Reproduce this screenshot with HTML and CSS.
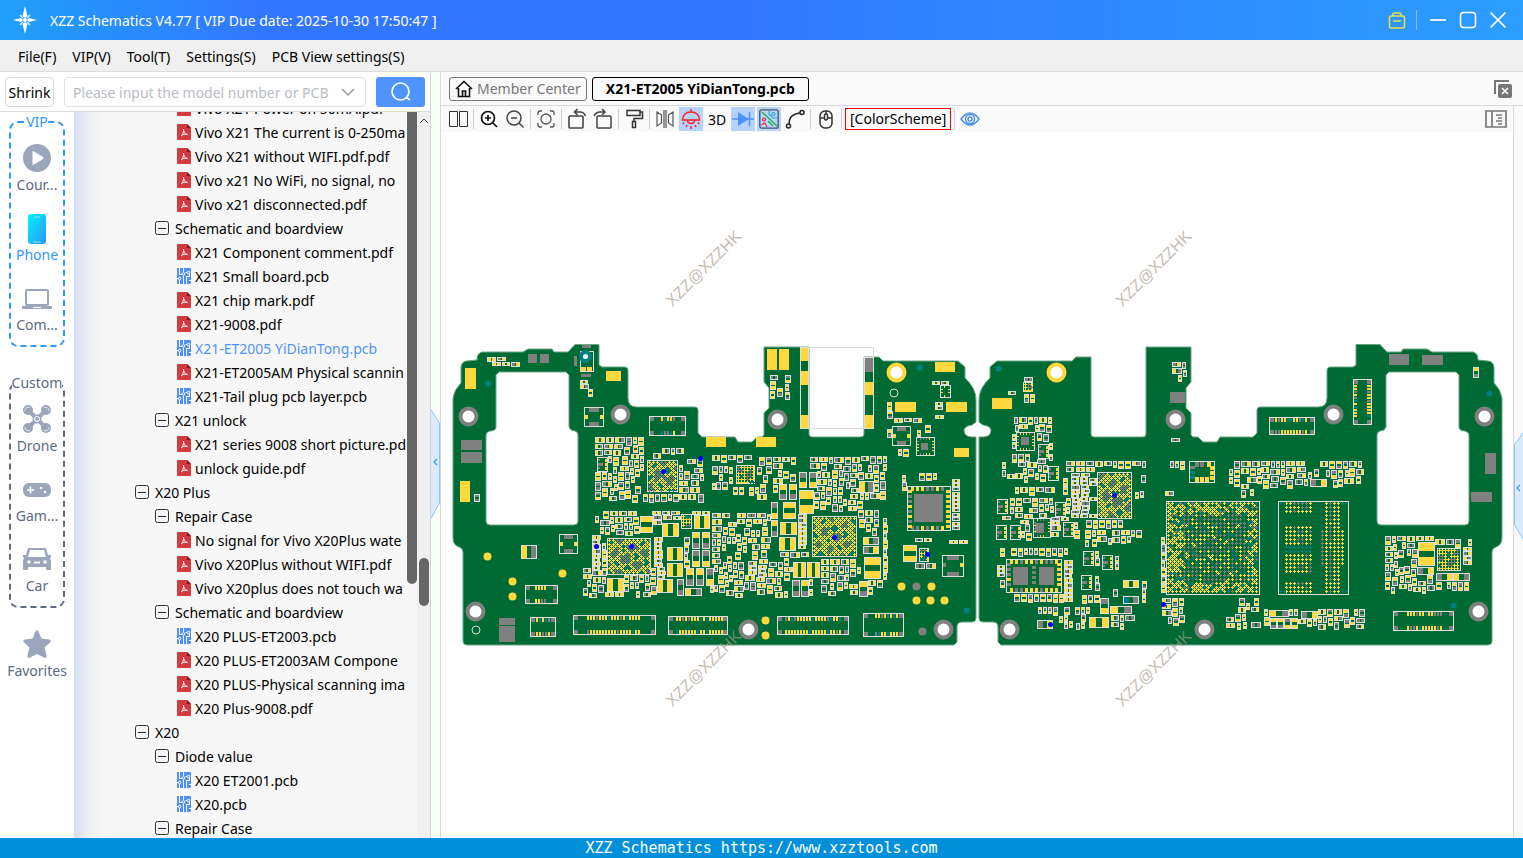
FILE: index.html
```html
<!DOCTYPE html>
<html lang="en">
<head>
<meta charset="utf-8">
<title>XZZ Schematics</title>
<link rel="stylesheet" href="styles.css">
</head>
<body>
<svg class="defs" aria-hidden="true">
  <symbol id="pdf" viewBox="0 0 14 16"><path d="M1 0H10L14 4V15Q14 16 13 16H1Q0 16 0 15V1Q0 0 1 0Z" fill="#d63a41"/><path d="M10 0L14 4H10Z" fill="#8d0d16"/><path d="M6.500 5C6.500 8 7.500 10 10.500 10.500C8 9.500 5.500 10.500 4 12C6 10.500 7 8 6.500 5" fill="none" stroke="#fff" stroke-width="1"/></symbol>
  <symbol id="pcb" viewBox="0 0 14 16"><rect width="14" height="16" rx="1" fill="#4d90fb"/><path d="M2.500 0V6.500H5M6.500 0V4M8.500 4.500H11M12.500 5V8.500H9.500V16M2.500 11V16M6.500 8V16M0 10.500H2M12 12.500H14" fill="none" stroke="#fff"/><g fill="#4d90fb" stroke="#fff"><circle cx="6.500" cy="6" r="1.300"/><circle cx="2.500" cy="10.500" r="1.300"/><circle cx="11.500" cy="4.500" r="1.300"/></g></symbol>
  <symbol id="minus" viewBox="0 0 14 14"><rect x=".5" y=".5" width="13" height="13" rx="2" fill="none" stroke="#333"/><path d="M3 7.500H11" stroke="#222"/></symbol>
</svg>

<header class="titlebar">
  <svg class="logo" viewBox="0 0 24 30"><g fill="#fff"><path d="M12 1L14.500 11L12 13L9.500 11Z"/><path d="M12 29L14.500 19L12 17L9.500 19Z"/><path d="M0 15L8 13L10 15L8 17Z"/><path d="M24 15L16 13L14 15L16 17Z"/></g><path d="M7 10L10 13M17 10L14 13M7 20L10 17M17 20L14 17" stroke="#d9ebff" stroke-width="1.500"/><circle cx="12" cy="15" r="2" fill="#fff"/></svg>
  <h1 class="app-title">XZZ Schematics V4.77 [ VIP Due date: 2025-10-30 17:50:47 ]</h1>
  <button class="win vip" aria-label="Membership"><svg viewBox="0 0 18 18"><g fill="none" stroke="#e6e04a" stroke-width="1.500"><rect x="1.500" y="5" width="15" height="12" rx="2"/><path d="M5 5V3Q5 2 6 2H12Q13 2 13 3V5M5 10H13"/></g></svg></button>
  <span class="win-sep"></span>
  <button class="win" aria-label="Minimize"><svg viewBox="0 0 18 18"><path d="M1 9H17" stroke="#fff" stroke-width="1.700"/></svg></button>
  <button class="win" aria-label="Maximize"><svg viewBox="0 0 18 18"><rect x="1.500" y="1.500" width="15" height="15" rx="3" fill="none" stroke="#fff" stroke-width="1.500"/></svg></button>
  <button class="win" aria-label="Close"><svg viewBox="0 0 18 18"><path d="M1.500 1.500L16.500 16.500M16.500 1.500L1.500 16.500" stroke="#fff" stroke-width="1.700"/></svg></button>
</header>

<nav class="menubar">
  <button>File(F)</button><button>VIP(V)</button><button>Tool(T)</button><button>Settings(S)</button><button>PCB View settings(S)</button>
</nav>

<main class="main">
  <aside class="panel">
    <form class="search">
      <button type="button" class="shrink">Shrink</button>
      <label class="combo"><input type="text" aria-label="Model search" placeholder="Please input the model number or PCB"><svg viewBox="0 0 14 8"><path d="M1 1L7 7L13 1" fill="none" stroke="#999ca5" stroke-width="1.500"/></svg></label>
      <button type="button" class="go" aria-label="Search"><svg viewBox="0 0 22 22"><circle cx="10.500" cy="10.500" r="8.500" fill="none" stroke="#fff" stroke-width="1.700"/><path d="M16 16L20 19" stroke="#fff" stroke-width="1.700"/></svg></button>
    </form>
    <div class="browse">
      <div class="rail">
        <fieldset class="group vip-group"><legend>VIP</legend>
          <button class="cat"><svg viewBox="0 0 28 28"><circle cx="14" cy="14" r="14" fill="#9ba6bc"/><path d="M9.500 8Q9.500 6.500 11 7.500L20 13Q21 14 20 15L11 20.500Q9.500 21 9.500 20Z" fill="#fff"/></svg>Cour...</button>
          <button class="cat on"><svg viewBox="0 0 28 28"><defs><linearGradient id="ph" x1="0" x2="1" y1="0" y2="1"><stop stop-color="#00f3ff"/><stop offset="1" stop-color="#2f95ff"/></linearGradient></defs><rect x="5" y="0" width="18" height="30" rx="3" fill="url(#ph)"/><path d="M11 3H17M10 28H18" stroke="#9fe6ff"/></svg>Phone</button>
          <button class="cat"><svg viewBox="0 0 28 28"><rect x="3" y="6" width="22" height="15" rx="1" fill="none" stroke="#9ba6bc" stroke-width="2"/><path d="M-1 22H29V24Q29 25 28 25H0Q-1 25 -1 24Z" fill="#9ba6bc"/><path d="M10 23.500H18" stroke="#fff"/></svg>Com...</button>
        </fieldset>
        <fieldset class="group"><legend>Custom</legend>
          <button class="cat"><svg viewBox="0 0 28 28"><g fill="#9ba6bc"><circle cx="5" cy="5" r="5"/><circle cx="23" cy="5" r="5"/><circle cx="5" cy="23" r="5"/><circle cx="23" cy="23" r="5"/></g><path d="M6 6L22 22M22 6L6 22" stroke="#9ba6bc" stroke-width="4"/><g fill="none" stroke="#e4e8ef"><path d="M2 6A3.500 3.500 0 0 1 7 2.500M26 6A3.500 3.500 0 0 0 21 2.500M2 22A3.500 3.500 0 0 0 7 25.500M26 22A3.500 3.500 0 0 1 21 25.500"/></g><circle cx="14" cy="14" r="4.500" fill="#9ba6bc"/><circle cx="14" cy="14" r="2.500" fill="none" stroke="#fff"/></svg>Drone</button>
          <button class="cat"><svg viewBox="0 0 28 28"><rect y="8" width="28" height="14" rx="6" fill="#9ba6bc"/><path d="M4 15H11M7.500 11.500V18.500" stroke="#fff" stroke-width="1.700"/><circle cx="18" cy="13" r="1.300" fill="#fff"/><circle cx="22" cy="17" r="1.300" fill="#fff"/></svg>Gam...</button>
          <button class="cat"><svg viewBox="0 0 28 28"><path d="M5 3H23L25 10H28V12L27 13Q28 15 28 17V24Q28 25 27 25H24Q23 25 23 24V22H5V24Q5 25 4 25H1Q0 25 0 24V17Q0 15 1 13L0 12V10H3Z" fill="#9ba6bc"/><path d="M7 5H21L23 12H5Z" fill="#fff"/><circle cx="6" cy="17" r="1.800" fill="#fff"/><circle cx="22" cy="17" r="1.800" fill="#fff"/><path d="M11 17.500H17" stroke="#fff" stroke-width="2"/></svg>Car</button>
        </fieldset>
        <button class="cat fav"><svg viewBox="0 0 28 28"><path d="M12.500 1.500Q14 -1 15.500 1.500L18.500 8.500L26 9.500Q29 10 27 12.500L21.500 17.500L23.500 25.500Q24 29 21 27.500L14 24L7 27.500Q4 29 4.500 25.500L6.500 17.500L1 12.500Q-1 10 2 9.500L9.500 8.500Z" fill="#9ba6bc"/></svg>Favorites</button>
      </div>
      <div class="tree-area">
        <ul class="tree">
          <li class="file"><svg><use href="#pdf"/></svg>Vivo X21 Power on 50mA.pdf</li>
          <li class="file"><svg><use href="#pdf"/></svg>Vivo X21 The current is 0-250ma</li>
          <li class="file"><svg><use href="#pdf"/></svg>Vivo X21 without WIFI.pdf.pdf</li>
          <li class="file"><svg><use href="#pdf"/></svg>Vivo x21 No WiFi, no signal, no</li>
          <li class="file"><svg><use href="#pdf"/></svg>Vivo x21 disconnected.pdf</li>
          <li class="folder"><button aria-label="Collapse"><svg><use href="#minus"/></svg></button>Schematic and boardview</li>
          <li class="file"><svg><use href="#pdf"/></svg>X21 Component comment.pdf</li>
          <li class="file"><svg><use href="#pcb"/></svg>X21 Small board.pcb</li>
          <li class="file"><svg><use href="#pdf"/></svg>X21 chip mark.pdf</li>
          <li class="file"><svg><use href="#pdf"/></svg>X21-9008.pdf</li>
          <li class="file selected"><svg><use href="#pcb"/></svg>X21-ET2005 YiDianTong.pcb</li>
          <li class="file"><svg><use href="#pdf"/></svg>X21-ET2005AM Physical scannin</li>
          <li class="file"><svg><use href="#pcb"/></svg>X21-Tail plug pcb layer.pcb</li>
          <li class="folder"><button aria-label="Collapse"><svg><use href="#minus"/></svg></button>X21 unlock</li>
          <li class="file"><svg><use href="#pdf"/></svg>X21 series 9008 short picture.pd</li>
          <li class="file"><svg><use href="#pdf"/></svg>unlock guide.pdf</li>
          <li class="model"><button aria-label="Collapse"><svg><use href="#minus"/></svg></button>X20 Plus</li>
          <li class="folder"><button aria-label="Collapse"><svg><use href="#minus"/></svg></button>Repair Case</li>
          <li class="file"><svg><use href="#pdf"/></svg>No signal for Vivo X20Plus wate</li>
          <li class="file"><svg><use href="#pdf"/></svg>Vivo X20Plus without WIFI.pdf</li>
          <li class="file"><svg><use href="#pdf"/></svg>Vivo X20plus does not touch wa</li>
          <li class="folder"><button aria-label="Collapse"><svg><use href="#minus"/></svg></button>Schematic and boardview</li>
          <li class="file"><svg><use href="#pcb"/></svg>X20 PLUS-ET2003.pcb</li>
          <li class="file"><svg><use href="#pdf"/></svg>X20 PLUS-ET2003AM Compone</li>
          <li class="file"><svg><use href="#pdf"/></svg>X20 PLUS-Physical scanning ima</li>
          <li class="file"><svg><use href="#pdf"/></svg>X20 Plus-9008.pdf</li>
          <li class="model"><button aria-label="Collapse"><svg><use href="#minus"/></svg></button>X20</li>
          <li class="folder"><button aria-label="Collapse"><svg><use href="#minus"/></svg></button>Diode value</li>
          <li class="file"><svg><use href="#pcb"/></svg>X20 ET2001.pcb</li>
          <li class="file"><svg><use href="#pcb"/></svg>X20.pcb</li>
          <li class="folder"><button aria-label="Collapse"><svg><use href="#minus"/></svg></button>Repair Case</li>
        </ul>
        <div class="inner-bar"></div>
        <div class="outer-bar"><svg viewBox="0 0 10 6"><path d="M1 5L5 1L9 5" fill="none" stroke="#444"/></svg><span class="thumb"></span></div>
      </div>
    </div>
  </aside>

  <div class="splitter"><button aria-label="Hide list"><svg viewBox="0 0 10 110"><path d="M0 .5L8.500 14V94L0 109.500" fill="#d9ecff" stroke="#8cc6f8"/><path d="M6 50L3 53L6 56" fill="none" stroke="#379df0" stroke-width="1.300"/></svg></button></div>

  <section class="work">
    <div class="tabs">
      <button class="tab home"><svg viewBox="0 0 18 18"><path d="M1 9L9 1.500L17 9M3.500 8V16.500H14.500V8M7.500 16V11H10.500V16" fill="none" stroke="#111" stroke-width="1.600"/></svg>Member Center</button>
      <button class="tab active">X21-ET2005 YiDianTong.pcb</button>
      <button class="close-all" aria-label="Close all"><svg viewBox="0 0 18 18"><path d="M1 14V1H15" fill="none" stroke="#777" stroke-width="2"/><rect x="4" y="4" width="14" height="14" rx="2" fill="#777"/><path d="M8 8L14 14M14 8L8 14" stroke="#fff" stroke-width="1.500"/></svg></button>
    </div>
    <div class="stage">
      <div class="view">
        <div class="toolbar">
          <button class="tool" aria-label="Split"><svg viewBox="0 0 20 20"><path d="M1.500 2.500H9.500V17.500H1.500ZM11.500 2.500H19.500V17.500H11.500Z" fill="none" stroke="#333"/></svg></button><i class="sep"></i>
          <button class="tool" aria-label="Zoom in"><svg viewBox="0 0 20 20"><g fill="none" stroke="#111" stroke-width="1.700"><circle cx="9" cy="9" r="6.500"/><path d="M14 14L18 18M6 9H12M9 6V12"/></g></svg></button>
          <button class="tool" aria-label="Zoom out"><svg viewBox="0 0 20 20"><g fill="none" stroke="#444" stroke-width="1.500"><circle cx="9" cy="9" r="7"/><path d="M14 14L18.500 18.500M6 9H12"/></g></svg></button><i class="sep"></i>
          <button class="tool" aria-label="Fit"><svg viewBox="0 0 20 20"><g fill="none" stroke="#555" stroke-width="1.300"><path d="M2 6V4Q2 2 4 2H6M14 2H16Q18 2 18 4V6M18 14V16Q18 18 16 18H14M6 18H4Q2 18 2 16V14"/><circle cx="10" cy="10" r="5"/></g></svg></button><i class="sep"></i>
          <button class="tool" aria-label="Rotate left"><svg viewBox="0 0 20 20"><g fill="none" stroke="#444" stroke-width="1.600"><rect x="2" y="7" width="14" height="12" rx="1"/><path d="M8 3H13Q17 3 18.500 7M10.500 0L7.500 3L10.500 6"/></g></svg></button>
          <button class="tool" aria-label="Rotate right"><svg viewBox="0 0 20 20"><g fill="none" stroke="#444" stroke-width="1.500"><rect x="4" y="7" width="14" height="12" rx="1"/><path d="M1 7Q3 3 7 3H12M9 0L12 3L9 6"/></g></svg></button><i class="sep"></i>
          <button class="tool" aria-label="Paint"><svg viewBox="0 0 20 20"><path d="M3 1.500H16V6.500H3ZM16 3H18.500V9.500H10V13M8.500 12.500H11.500V18.500H8.500Z" fill="none" stroke="#333" stroke-width="1.500"/></svg></button><i class="sep"></i>
          <button class="tool" aria-label="Mirror"><svg viewBox="0 0 20 20"><path d="M2 3L6.500 6V14L2 17ZM18 3L13.500 6V14L18 17ZM9 1V19M11 1V19" fill="none" stroke="#555" stroke-width="1.200"/></svg></button>
          <button class="tool on" aria-label="Lamp"><svg viewBox="0 0 20 20"><g fill="none" stroke="#f22" stroke-width="1.500"><path d="M1.500 11Q2 3 10 3Q18 3 18.500 11ZM10 3V0M6.500 11Q6.500 14.500 10 14.500Q13.500 14.500 13.500 11M3 13.500L2 15M17 13.500L18 15M6 16L5 18M14 16L15 18M10 17V20"/></g></svg></button>
          <button class="tool text">3D</button>
          <button class="tool on" aria-label="Diode"><svg viewBox="0 0 20 20"><path d="M-1 10H21M16.500 3V17" stroke="#4b93ff" stroke-width="1.500"/><path d="M5 3L16 10L5 17Z" fill="#4b93ff"/></svg></button>
          <button class="tool on" aria-label="Nets"><svg viewBox="0 0 20 20"><rect x=".8" y=".8" width="18.400" height="18.400" rx="2" fill="none" stroke="#456" stroke-width="1.300"/><g fill="none" stroke-width="1.200"><path d="M3 3L18 17" stroke="#16b03b"/><path d="M10 2V5L14 9H18" stroke="#2ca7df"/><circle cx="14.500" cy="5" r="1.500" stroke="#2ca7df"/><path d="M2 16L6 14L8 18" stroke="#ee3030"/><circle cx="5" cy="10.500" r="1.500" stroke="#ee3030"/><path d="M9 12L14 17" stroke="#16b03b"/></g></svg></button>
          <button class="tool" aria-label="Curve"><svg viewBox="0 0 20 20"><g fill="none" stroke="#222" stroke-width="1.500"><path d="M4 15Q4 5 15 4"/><circle cx="17" cy="3.500" r="2"/><circle cx="3.500" cy="17" r="2"/></g></svg></button><i class="sep"></i>
          <button class="tool" aria-label="Mouse"><svg viewBox="0 0 20 20"><g fill="none" stroke="#333" stroke-width="1.500"><rect x="4" y="2" width="12" height="17" rx="5"/><path d="M4 9H16M10 2V5"/><rect x="8.500" y="5" width="3" height="6" rx="1.500" fill="#fff"/></g></svg></button><i class="sep"></i>
          <button class="scheme">[ColorScheme]</button><i class="sep"></i>
          <button class="tool" aria-label="Visibility"><svg viewBox="0 0 20 20"><g fill="none" stroke="#4f90e8" stroke-width="1.500"><path d="M1 10Q10 -2 19 10Q10 22 1 10Z"/><circle cx="10" cy="10" r="4.500"/><circle cx="10" cy="10" r="2"/></g></svg></button>
          <button class="tool side" aria-label="Side list"><svg viewBox="0 0 22 20"><path d="M1 2H21V18H1ZM7 2V18" fill="none" stroke="#777" stroke-width="1.700"/><path d="M11 6H17M13 9H17M11 12H17M13 15H17" stroke="#777" stroke-width="1.300"/></svg></button>
        </div>
        <svg class="canvas" id="board" viewBox="441 132 1072 706" role="img" aria-label="Board view"></svg>
      </div>
      <div class="edge"><button aria-label="Show parts"><svg viewBox="0 0 10 110"><path d="M10 .5L.5 14V94L10 109.500" fill="#d9ecff" stroke="#8cc6f8"/><path d="M6 54L3 57L6 60" fill="none" stroke="#379df0" stroke-width="1.300"/></svg></button></div>
    </div>
  </section>
</main>
<footer class="status">XZZ Schematics https://www.xzztools.com</footer>
<script src="board.js"></script>
</body>
</html>
```
FILE: styles.css
```css
* { box-sizing: border-box; }
body { margin: 0; height: 100vh; display: flex; flex-direction: column; overflow: hidden; font-family: "Noto Sans", "Open Sans", sans-serif; font-size: 14px; color: #000; background: #fff; }
button { font: inherit; color: inherit; background: none; border: 0; padding: 0; margin: 0; }
svg { display: block; overflow: visible; flex: none; }
.defs { width: 0; height: 0; position: absolute; }

.titlebar { height: 40px; flex: none; display: flex; align-items: center; padding: 0 16px 0 13px; color: #fff; background: linear-gradient(90deg, #20a0fa 0, #3275ff 18%, #3275ff 45%, #2c9dff 100%); }
.logo { width: 24px; height: 30px; }
.app-title { margin: 0 auto 0 13px; font-size: 14px; font-weight: 400; }
.win { width: 18px; height: 18px; margin-left: 12px; }
.win-sep { width: 1px; height: 20px; margin: 0 0 0 10px; background: #7fc1ff; }

.menubar { height: 32px; flex: none; display: flex; gap: 16px; padding: 2px 18px 0; background: #f0f0f0; border-bottom: 1px solid #dcdcdc; }

.main { flex: 1; min-height: 0; display: flex; }
.panel { width: 431px; flex: none; display: flex; flex-direction: column; border-right: 1px solid #d5d5d5; }
.search { height: 40px; flex: none; display: flex; align-items: center; padding: 1px 5px 0; background: #fff; border-bottom: 1px solid #dcdcdc; }
.shrink { width: 49px; height: 30px; border: 1px solid #dcdcdc; border-radius: 4px; }
.combo { flex: 1; height: 30px; margin: 0 10px; display: flex; align-items: center; padding: 0 10px 0 8px; border: 1px solid #dcdfe6; border-radius: 4px; }
.combo input { flex: 1; min-width: 0; border: 0; padding: 0; font: inherit; background: none; outline: 0; }
.combo input::placeholder { color: #b9bcc4; }
.combo svg { width: 14px; height: 8px; margin-left: 6px; }
.go { width: 49px; height: 30px; border-radius: 3px; background: #5094ff; display: flex; align-items: center; justify-content: center; }
.go svg { width: 22px; height: 22px; }

.browse { flex: 1; min-height: 0; display: flex; overflow: hidden; }
.rail { width: 74px; flex: none; padding: 0 9px; color: #5d6a82; }
.group { min-width: 0; margin: 0 0 26px; padding: 0 0 3px; border: 2px dashed #5d6a82; border-radius: 9px; line-height: 20px; }
.group legend { margin: 0 auto; padding: 0; }
.vip-group { border-color: #2f98fa; }
.vip-group legend { color: #2f98fa; }
.cat { width: 100%; height: 70px; padding-top: 12px; display: flex; flex-direction: column; align-items: center; gap: 3px; line-height: 20px; }
.cat svg { width: 28px; height: 28px; }
.cat.on { color: #2f98fa; }
.cat.fav { margin-top: -16px; }

.tree-area { flex: 1; min-width: 0; display: flex; background: linear-gradient(90deg, #d5dff0 0, #e9edf4 12px, #f7f7f7 32px); }
.tree { flex: 1; min-width: 0; list-style: none; margin: -16px 1px 0 0; padding: 0; overflow: hidden; }
.tree li { height: 24px; display: flex; align-items: center; white-space: nowrap; }
.file { padding-left: 103px; }
.file svg { width: 14px; height: 16px; margin-right: 4px; }
.folder { padding-left: 81px; }
.model { padding-left: 61px; }
.tree button svg { width: 14px; height: 14px; margin-right: 6px; }
.tree .selected { color: #5094ff; }
.inner-bar { width: 10px; flex: none; align-self: flex-start; height: 65%; background: #666; border-radius: 0 0 5px 5px; }
.outer-bar { width: 13px; flex: none; padding: 6px 1px 0 2px; background: #f0f0f0; }
.outer-bar svg { width: 10px; height: 6px; }
.thumb { display: block; width: 10px; height: 48px; margin-top: 434px; border-radius: 5px; background: #666; }

.splitter { width: 10px; flex: none; display: flex; align-items: center; padding-top: 18px; background: #f9fff9; border-right: 1px solid #d9d9d9; }
.splitter svg, .edge svg { width: 10px; height: 110px; }

.work { flex: 1; min-width: 0; display: flex; flex-direction: column; }
.tabs { height: 34px; flex: none; display: flex; align-items: center; gap: 5px; padding: 0 11px 0 8px; background: #fafafa; border-bottom: 1px solid #d9d9d9; }
.tab { height: 24px; display: flex; align-items: center; justify-content: center; gap: 4px; padding: 0 5px; border: 1px solid #777; border-radius: 3px; color: #777; background: #fafafa; }
.tab svg { width: 18px; height: 18px; }
.tab.active { padding: 0 13px; color: #000; font-weight: 700; border-color: #000; }
.close-all { margin-left: auto; }
.close-all svg { width: 18px; height: 18px; }
.stage { flex: 1; min-height: 0; display: flex; }
.view { flex: 1; min-width: 0; display: flex; flex-direction: column; }
.toolbar { height: 26px; flex: none; display: flex; align-items: center; padding: 0 4px; background: #fafafa; }
.tool { width: 24px; height: 24px; margin: 0 1px; display: flex; align-items: center; justify-content: center; flex: none; }
.tool svg { width: 20px; height: 20px; }
.tool.on { background: #b7d2fb; }
.tool.side { margin-left: auto; }
.tool.side svg { width: 22px; }
.sep { width: 1px; height: 20px; margin: 0 2px; background: #cfcfcf; flex: none; }
.scheme { height: 22px; margin: 0 1px; padding: 0 4px; border: 1px solid #f00; line-height: 20px; }
.canvas { flex: 1; min-height: 0; width: 100%; background: #fff; overflow: hidden; }
.edge { width: 10px; flex: none; display: flex; align-items: center; padding-top: 28px; background: #fafafa; border-left: 1px solid #d9d9d9; }
.watermark { font-family: "Liberation Sans", sans-serif; font-size: 16px; fill: #a79a8c; opacity: .65; text-anchor: middle; }

.status { height: 20px; flex: none; background: #0390da; color: #fff; text-align: center; font: 15px/20px "DejaVu Sans Mono", monospace; }
```
FILE: board.js
```js
const svg = document.getElementById('board');
const NS = 'http://www.w3.org/2000/svg';
const C = { board: '#006a35', y: '#ffd83d', g: '#808080', w: '#dedede', t: '#008080', b: '#0000ff', white: '#fff' };

function add(tag, attrs, text) {
  const el = document.createElementNS(NS, tag);
  for (const k in attrs) el.setAttribute(k, attrs[k]);
  if (text) el.textContent = text;
  svg.appendChild(el);
  return el;
}

// Seeded generator keeps the drawing stable between loads.
let seed = 20051;
function rnd() {
  seed = (seed * 1664525 + 1013904223) >>> 0;
  return seed / 4294967296;
}

const outline = 'M467 645Q463 645 463 641V552Q463 548 459 547Q453 545 453 538V398Q454 390 461 383V367Q462 361 467 361L477 360Q477 353 482 352H523L528 349H552L554 352H568L575 344.500H599V365L602 367H625Q628 367 628 371V398Q628 407 637 407H695Q698 407 698 410V433L702 437H735L738 442H752L757 437H762L764 435V413L769 408V388L764 382V347H809V434Q809 437 812 437H861Q864 437 864 434V357H879L883 361H958L965 367V378Q976 388 976 400V422L972 425Q964 426 964 431Q965 437 972 437H976V618Q976 622 972 622H962Q957 622 957 627V642L954 645Z' +
  'M499 372H566L569 375V427L571 430L575 431Q578 432 578 435V521Q578 525 574 525H490Q486 525 486 521V435Q486 432 490 431Q496 431 496 427V375Z';
for (const transform of ['', 'translate(1955 0) scale(-1 1)']) {
  add('path', { d: outline, transform, fill: C.board, 'fill-rule': 'evenodd', stroke: '#66a585', 'stroke-width': 1 });
}

const fills = { w: '', bg: '', g: '', y: '', t: '', b: '' };
const used = new Uint8Array(1523 * 858);
function box(x, y, w, h, c) { fills[c] += `M${x} ${y}h${w}v${h}h${-w}z`; }
function mark(x, y, w, h) {
  for (let j = y; j < y + h; j++) for (let i = x; i < x + w; i++) used[j * 1523 + i] = 1;
}
function free(x, y, w, h) {
  for (let j = y; j < y + h; j++) for (let i = x; i < x + w; i++) if (used[j * 1523 + i]) return false;
  return true;
}
function frame(x, y, w, h) {
  box(x, y, w, h, 'w');
  box(x + 1, y + 1, w - 2, h - 2, 'bg');
  mark(x, y, w, h);
}
function pad(x, y, w, h, c) { box(x, y, w, h, c || 'y'); mark(x, y, w, h); }
// Two-terminal part; the pads sit at the ends of the longer side.
function chip(x, y, w, h, a, b, vertical) {
  const v = vertical === undefined ? h >= w : vertical;
  frame(x, y, w, h);
  if (v) {
    const p = Math.max(2, Math.round((h - 2) * .36));
    box(x + 1, y + 1, w - 2, p, a);
    box(x + 1, y + h - 1 - p, w - 2, p, b);
  } else {
    const p = Math.max(2, Math.round((w - 2) * .36));
    box(x + 1, y + 1, p, h - 2, a);
    box(x + w - 1 - p, y + 1, p, h - 2, b);
  }
}
const tone = () => (rnd() < .66 ? 'y' : 'g');

// Connector: a framed body with pins on both long sides.
function connector(x, y, w, h, from, to, side) {
  frame(x, y, w, h);
  const pin = () => (rnd() < .72 ? 'y' : rnd() < .6 ? 'g' : 't');
  if (side) {
    for (let j = from; j < to; j += 3) { box(x + 1, y + j, 3, 2, pin()); box(x + w - 5, y + j, 4, 2, pin()); }
  } else {
    for (let i = from; i < to; i += 3) { box(x + i, y + 1, 2, 4, pin()); box(x + i, y + h - 5, 2, 4, pin()); }
  }
  for (const [cx, cy] of [[1, 1], [w - 5, 1], [1, h - 5], [w - 5, h - 5]]) box(x + cx, y + cy, 4, 4, 'g');
}
// Leadless package with perimeter pads and optional thermal pad.
function qfn(x, y, w, h, core) {
  frame(x, y, w, h);
  const s = w > 30 ? 4 : 2;
  for (let i = 4; i < w - 5; i += s + 1) { box(x + i, y + 1, s - 1, s, tone()); box(x + i, y + h - 1 - s, s - 1, s, tone()); }
  for (let j = 4; j < h - 5; j += s + 1) { box(x + 1, y + j, s, s - 1, tone()); box(x + w - 1 - s, y + j, s, s - 1, 'y'); }
  for (const [cx, cy, cw, ch] of core || []) box(x + cx, y + cy, cw, ch, 'g');
}
function cross(x, y, c) { box(x - 1, y, 3, 1, c); box(x, y - 1, 1, 3, c); }
function bga(x, y, w, h, pitch, mix, diagonal) {
  frame(x, y, w, h);
  for (let r = 0, j = y + 2; j < y + h - 1; j += diagonal ? pitch / 2 : pitch, r++) {
    for (let i = x + 2 + (diagonal && r % 2 ? pitch / 2 : 0); i < x + w - 1; i += pitch) {
      const dx = Math.abs(i - x - w / 2) / w, dy = Math.abs(j - y - h / 2) / h;
      const inner = dx < .3 && dy < .3;
      const wave = Math.sin(i * .41 + j * .23) + Math.cos(j * .37 - i * .2) + rnd();
      const c = wave > (inner ? 1.1 - mix : 1.8 - mix) ? 'g' : wave < -.9 ? 't' : 'y';
      cross(i, j, c);
    }
  }
}

// Large bare pads.
[[465,368,11,21],[460,481,10,21],[606,371,15,10],[706,437,20,10],[756,437,20,10],[767,349,10,21],[779,349,10,21],[935,362,20,10],[895,402,21,10],[946,402,21,10],[954,448,15,9],[992,398,20,11],
 [461,440,21,10,'g'],[461,452,21,11,'g'],[528,354,9,9,'g'],[540,354,9,9,'g'],[499,618,16,7,'g'],[499,626,16,16,'g'],[582,345,9,3,'g'],[574,356,3,10,'g'],[581,374,10,3,'g'],
 [1170,392,15,11,'g'],[1389,354,20,11,'g'],[1422,355,21,10,'g'],[1485,453,11,21,'g'],[1471,492,21,10,'g']
].forEach(p => pad(...p));

// Shielded slot between the two upper arms.
frame(800, 347, 9, 82);
frame(864, 357, 10, 72);
[[801,348,7,13],[801,371,7,14],[801,415,7,13],[865,382,8,13],[865,415,8,13]].forEach(p => pad(...p));
pad(865, 358, 8, 14, 'g');

// Inductors and large capacitors: x, y, w, h, pads, vertical.
[[640,516,13,17,'y','y',1],[662,523,17,14,'y','y',0],[694,515,16,14,'y','y',0],[667,547,16,14,'y','y',0],[667,563,16,14,'y','y',0],[607,578,17,14,'y','y',0],[657,579,16,14,'y','y',0],
 [799,490,15,24,'y','y',1],[783,502,13,17,'y','y',1],[780,522,17,13,'y','y',0],[779,537,17,14,'y','y',0],[793,562,13,16,'y','y',0],[807,562,13,16,'y','y',0],[864,557,17,22,'y','y',1],[792,580,8,17,'g','g',1],[801,580,8,17,'y','g',1],[859,581,9,16,'y','g',1],
 [799,472,8,16,'g','y',1],[809,472,8,16,'g','y',1],[779,484,8,16,'y','g',1],[789,484,8,16,'y','g',1],[771,502,7,17,'g','y',1],[771,520,7,17,'y','g',1],[859,481,15,12,'y','g',0],[863,537,16,8,'y','g',0],[863,546,16,8,'g','y',0],
 [692,532,8,17,'y','g',1],[702,532,8,17,'y','g',1],[692,550,8,17,'g','y',1],[702,550,8,17,'g','y',1],[686,568,8,18,'y','g',1],[696,568,8,18,'y','g',1],[706,568,8,18,'g','y',1],[685,588,17,8,'y','g',0],[677,579,7,17,'g','g',1],
 [903,545,14,17,'y','y',1],[521,545,16,14,'y','g',0],[1089,617,20,11,'y','y',0],[1110,606,22,8,'y','g',0],[1123,580,16,8,'y','y',0],[1123,596,16,8,'t','g',0],[1100,598,9,16,'g','y',1],[1037,620,16,9,'g','y',0],
 [1418,542,17,24,'y','y',1],[1417,567,17,8,'g','y',0],[1436,573,17,8,'g','y',0],[1453,573,17,8,'y','g',0],[1310,479,17,8,'g','y',0],[1269,610,20,7,'y','g',0],[1301,611,17,8,'g','y',0],[1270,618,7,11,'y','g',1],[1277,618,7,11,'y','g',1],[1284,618,7,11,'g','y',1],[1291,618,7,11,'y','y',1],
 [1473,367,6,11,'y','g',1]
].forEach(p => chip(p[0], p[1], p[2], p[3], p[4], p[5], !!p[6]));

// Tactile parts with four-sided pads.
[[584,407,20,20],[559,534,19,20],[892,426,19,20],[942,555,22,22]].forEach(([x, y, w, h]) => {
  frame(x, y, w, h);
  box(x + 5, y + 1, w - 10, 4, 'g'); box(x + 5, y + h - 5, w - 10, 4, 'g');
  box(x + 1, y + 8, 3, 4, w > 20 ? 'g' : 'y'); box(x + w - 4, y + 8, 3, 4, 'y');
});
frame(580, 351, 14, 21); box(581, 367, 5, 4, 'y'); box(587, 367, 5, 4, 'y');

connector(649, 416, 37, 20, 12, 26);
connector(525, 585, 33, 19, 10, 22);
connector(530, 617, 26, 20, 6, 20);
connector(573, 615, 83, 20, 14, 68);
connector(668, 616, 60, 19, 8, 54);
connector(777, 616, 72, 19, 8, 64);
connector(863, 613, 41, 24, 12, 34);
connector(1269, 417, 46, 18, 6, 38);
connector(1353, 379, 19, 46, 6, 38, true);
connector(1393, 611, 61, 20, 14, 48);

qfn(907, 486, 44, 45, [[7, 8, 29, 28]]);
qfn(916, 437, 19, 19, [[5, 6, 7, 7]]);
qfn(1016, 432, 19, 19, [[5, 5, 8, 8]]);
qfn(1006, 559, 56, 34, [[7, 8, 15, 18], [33, 8, 15, 18], [26, 7, 4, 3], [26, 12, 4, 3], [26, 17, 4, 3], [26, 22, 4, 3]]);
qfn(1033, 518, 18, 20, [[2, 5, 9, 10]]);
frame(1189, 461, 26, 22);
[[6,1,'g'],[11,1,'g'],[18,1,'y'],[6,16,'y'],[11,16,'y'],[16,16,'y']].forEach(([x, y, c]) => box(1189 + x, 461 + y, 4, 5, c));
[[5,'g'],[10,'t'],[15,'t']].forEach(([y, c]) => { box(1190, 461 + y, 5, 3, c); box(1210, 461 + y, 4, 4, 'y'); });
qfn(940, 385, 11, 13);
[[1083,551],[1102,555],[1081,575],[1063,522],[996,525],[1010,525],[1048,466],[1055,502],[597,457],[997,499],[1038,444]].forEach(([x, y]) => {
  frame(x, y, 11, 15);
  for (const j of [2, 6, 10]) { box(x + 1, y + j, 2, 2, 'g'); box(x + 8, y + j, 2, 3, 'y'); }
  box(x + 1, y + 6, 5, 3, 'g');
});

bga(647, 460, 31, 32, 4, .5, true);
bga(607, 538, 44, 37, 4, .4, true);
bga(736, 465, 19, 19, 3, .2, false);
bga(812, 516, 45, 41, 4, 0, true);
bga(1097, 472, 35, 47, 4, .3, true);
bga(1023, 382, 10, 10, 3, 0, false);
bga(919, 548, 10, 14, 3, .2, false);
bga(1437, 548, 24, 23, 3, .2, false);
bga(681, 514, 11, 15, 3, 0, false);

// Main processor: single-pitch array, with a denser interleaved rim.
frame(1166, 501, 94, 94);
for (let j = 503; j < 594; j += 4) for (let i = 1168; i < 1260; i += 4) {
  const inner = i > 1180 && i < 1248 && j > 514 && j < 580;
  const c = inner ? (rnd() < .55 ? 'g' : rnd() < .2 ? 't' : 'y') : (rnd() < .74 ? 'y' : rnd() < .5 ? 't' : 'g');
  cross(i, j, c);
  if (i < 1256 && j < 590 && rnd() < (inner ? .06 : .7)) cross(i + 2, j + 2, rnd() < .75 ? 'y' : 't');
}
// Memory package: two column banks.
frame(1278, 501, 71, 94);
for (let j = 503; j < 594; j += 4) {
  const gap = (j > 514 && j < 525) || (j > 571 && j < 580);
  for (let i = 1286; i < 1313; i += 4) if (!gap) cross(i, j, j > 543 && j < 552 ? 't' : i > 1290 && rnd() < .3 ? 'g' : 'y');
  for (let i = 1326; i < 1340; i += 4) cross(i, j, i === 1330 && rnd() < .7 ? 'g' : 'y');
  if (j > 530 && j < 565) { cross(1342, j, 'y'); cross(1322, j, 'g'); }
}
[[1280,503],[1284,503],[1342,503],[1346,503],[1280,591],[1284,591],[1342,591],[1346,591]].forEach(p => cross(p[0], p[1], 't'));

// Dense passive areas: x, y, w, h, density, orientation (h / v / mixed).
const sizes = { v: [[5, 8], [4, 7], [5, 9], [6, 8]], h: [[9, 5], [8, 4], [9, 4]], m: [[5, 8], [9, 5], [6, 8], [8, 5], [4, 7], [6, 9], [10, 6], [8, 6]] };
[[595,437,48,65,.93,'m'],[643,448,42,10,.7,'m'],[679,459,24,43,.85,'m'],[642,494,38,8,.95,'v'],
 [595,511,46,26,.92,'m'],[592,535,10,38,.9,'h'],[601,535,5,36,.8,'v'],[583,568,74,29,.9,'m'],[652,511,60,13,.9,'h'],[654,537,13,44,.9,'h'],[684,537,8,40,.8,'v'],
 [712,455,48,10,.85,'m'],[712,466,20,29,.65,'m'],[732,487,26,12,.85,'v'],[757,457,38,45,.86,'m'],
 [712,513,58,50,.76,'m'],[748,518,20,60,.95,'h'],[710,562,72,35,.93,'m'],[780,552,32,45,.85,'m'],
 [810,457,53,56,.86,'m'],[855,456,31,44,.8,'m'],[858,510,20,26,.85,'m'],[798,514,13,44,.9,'h'],[821,559,43,38,.85,'m'],[868,580,14,17,.9,'m'],[883,518,4,68,1,'v'],
 [952,479,7,54,1,'h'],[902,467,6,36,.9,'v'],[919,473,25,12,.55,'v'],[770,375,20,28,.8,'m'],[887,429,4,16,.9,'v'],[887,402,5,16,.9,'v'],[935,402,8,17,.9,'h'],[888,418,33,4,1,'h'],[908,392,18,4,.8,'h'],[932,381,24,5,.7,'h'],[941,432,9,12,.8,'h'],[898,449,12,9,.9,'v'],[917,425,14,11,.7,'m'],
 [474,494,8,11,1,'m'],[487,357,21,5,.9,'h'],[492,362,27,5,.9,'h'],[580,380,11,12,.9,'h'],[588,385,4,17,.8,'v'],[581,537,4,19,.8,'v'],
 [1014,417,38,15,.86,'m'],[1037,430,15,33,.85,'m'],[1012,432,4,18,.9,'v'],[1012,454,20,12,.6,'v'],[1002,462,58,20,.86,'m'],[1015,487,43,10,.85,'m'],[1010,498,60,20,.83,'m'],[1002,516,70,9,.8,'h'],[1018,522,62,18,.7,'m'],
 [1000,548,70,10,.95,'v'],[1064,560,8,42,1,'h'],[1003,594,60,8,.7,'v'],[997,565,8,15,.8,'h'],[996,580,9,12,.8,'v'],
 [1066,461,30,10,.9,'m'],[1071,469,25,50,1,'h'],[1063,478,9,18,.9,'v'],[1084,461,62,9,.9,'m'],[1135,470,10,28,.75,'m'],
 [1082,520,40,9,.95,'v'],[1085,530,58,17,.7,'m'],[1095,551,4,16,1,'v'],[1115,556,4,16,1,'v'],[1095,576,4,16,1,'v'],[1082,595,22,8,.9,'v'],
 [1038,607,64,22,.72,'v'],[1111,605,34,10,.7,'h'],[1111,615,35,14,.9,'m'],[1142,573,4,29,.8,'v'],[1113,589,7,8,1,'v'],
 [1161,537,4,58,.9,'v'],[1162,598,22,31,.86,'m'],[1170,461,16,9,.9,'v'],[1165,491,9,4,1,'h'],[1172,362,14,24,.8,'m'],[1171,438,16,4,1,'h'],
 [1229,461,134,27,.9,'m'],[1241,489,14,9,.9,'v'],[1229,598,29,14,.8,'m'],[1226,612,36,17,.6,'m'],[1264,609,100,20,.92,'m'],
 [1385,536,50,57,.9,'m'],[1435,539,36,9,.6,'m'],[1463,542,8,33,.95,'h'],[1400,582,71,12,.95,'v'],[1024,377,8,6,.9,'h'],[1008,391,10,5,.9,'h'],[1024,394,10,12,.8,'v'],[915,563,20,9,.8,'m'],[915,538,18,6,.8,'h'],[949,540,20,5,.8,'h']
].forEach(([x, y, w, h, density, kind]) => {
  const gap = kind === 'm' ? 1 : 0;
  for (let j = y; j <= y + h - 4; j++) for (let i = x; i <= x + w - 3; i++) {
    if (used[j * 1523 + i]) continue;
    const list = sizes[kind];
    for (let n = 0; n < 5; n++) {
      const [cw, ch] = list[Math.floor(rnd() * list.length)];
      if (i + cw > x + w + 1 || j + ch > y + h + 1 || !free(i, j, cw, ch)) continue;
      if (rnd() > density) { mark(i, j, cw, ch); break; }
      chip(i, j, cw, ch, tone(), tone());
      mark(i, j, cw + 1, ch + gap);
      break;
    }
  }
});

for (const [key, fill] of [['w', C.w], ['bg', C.board], ['g', C.g], ['y', C.y], ['t', C.t], ['b', C.b]]) {
  add('path', { d: fills[key], fill, 'fill-rule': 'nonzero', 'shape-rendering': 'crispEdges' });
}
add('path', { d: 'M809 347.500H873.500V357M809 428.500H864', fill: 'none', stroke: '#d8d8d8' });

// Screw holes, then test points.
[[468,416],[620,414],[777,419],[475,611],[748,629],[943,629],[1009,629],[1175,419],[1204,629],[1333,414],[1484,416],[1478,611]].forEach(([x, y]) => add('circle', { cx: x + .5, cy: y + .5, r: 8, fill: C.white, stroke: C.g, 'stroke-width': 4 }));
[[896,372],[1056,372]].forEach(([x, y]) => add('circle', { cx: x + .5, cy: y + .5, r: 8, fill: C.white, stroke: C.y, 'stroke-width': 4 }));
add('circle', { cx: 585.5, cy: 356.5, r: 4.5, fill: C.white, stroke: C.t, 'stroke-width': 4 });
[[487,556],[562,573],[512,581],[512,596],[765,620],[765,635],[901,586],[931,586],[916,600],[930,600],[944,600]].forEach(([x, y]) => add('circle', { cx: x + .5, cy: y + .5, r: 4, fill: C.y }));
[[916,586],[922,631]].forEach(([x, y]) => add('circle', { cx: x + .5, cy: y + .5, r: 4, fill: C.g }));
[[488,383],[919,367],[966,610],[998,368],[1489,393],[1453,605]].forEach(([x, y]) => add('circle', { cx: x + .5, cy: y + .5, r: 3, fill: C.t }));
[[663,471],[700,458],[596,546],[631,546],[834,537],[927,554],[1114,495],[1163,604],[1050,624]].forEach(([x, y]) => add('circle', { cx: x + .5, cy: y + .5, r: 2.5, fill: C.b }));
[[476,630],[894,393]].forEach(([cx, cy]) => add('circle', { cx, cy, r: 4, fill: 'none', stroke: C.w }));

[[703,268],[1153,268],[703,668],[1153,668]].forEach(([x, y]) => add('text', { class: 'watermark', x: 0, y: 6, transform: `translate(${x} ${y}) rotate(-45)` }, 'XZZ@XZZHK'));
```
